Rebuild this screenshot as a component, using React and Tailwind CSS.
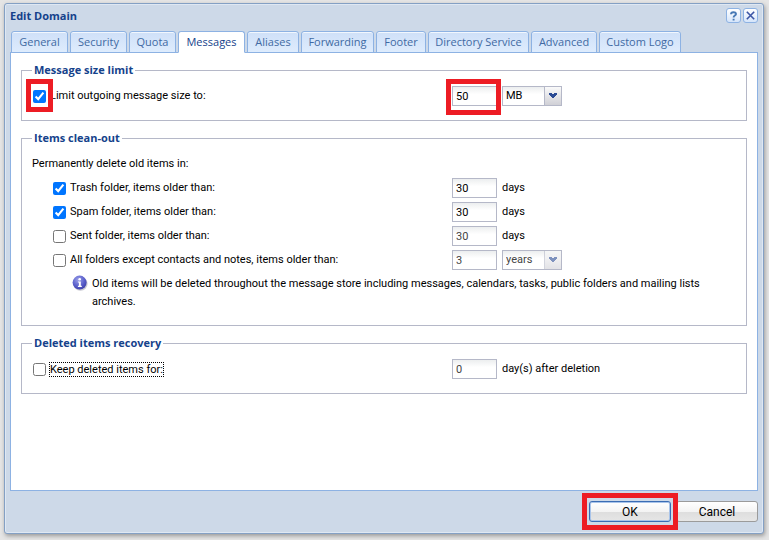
import React from "react";

const tabs = [
  { name: "General", width: "w-[57px]" },
  { name: "Security", width: "w-[57px]" },
  { name: "Quota", width: "w-[47px]" },
  { name: "Messages", width: "w-[67px]" },
  { name: "Aliases", width: "w-[52px]" },
  { name: "Forwarding", width: "w-[73px]" },
  { name: "Footer", width: "w-[50px]" },
  { name: "Directory Service", width: "w-[101px]" },
  { name: "Advanced", width: "w-[66px]" },
  { name: "Custom Logo", width: "w-[82px]" },
];

function Tab({ name, width, active }) {
  const look = active
    ? "border-b-white bg-white text-[#15428b]"
    : "border-b-[#8db2e3] bg-linear-to-b from-[#cfe0f8] to-[#deecfd] text-[#416aa3] shadow-[inset_0_1px_0_#f2f7fe]";
  return (
    <button
      type="button"
      role="tab"
      aria-selected={active}
      className={`${width} h-[22px] shrink-0 whitespace-nowrap rounded-t-[3px] border border-x-[#8db2e3] border-t-[#8db2e3] text-center font-['Open_Sans','Noto_Sans',sans-serif] leading-5 ${look}`}
    >
      {name}
    </button>
  );
}

function Group({ title, children, className = "" }) {
  return (
    <fieldset className={`min-w-0 border border-[#b5b8c8] px-[10px] ${className}`}>
      <legend className="px-[2px] font-['Open_Sans','Noto_Sans',sans-serif] leading-4 font-bold text-[#15428b]">
        {title}
      </legend>
      {children}
    </fieldset>
  );
}

function Check({ id, label, checked, marked, focused }) {
  return (
    <div className="flex h-5 w-full items-center gap-1">
      <span className="relative ml-px flex">
        <input id={id} type="checkbox" defaultChecked={checked} className="m-0 size-[13px] accent-[#0075ff]" />
        {marked && (
          <span className="pointer-events-none absolute -top-[11px] -left-[7px] h-[33px] w-[27px] border-5 border-[#ed1c24]" />
        )}
      </span>
      <label htmlFor={id} className={focused ? "-ml-px h-[15px] border border-dotted border-black leading-[13px]" : "leading-4"}>
        {label}
      </label>
    </div>
  );
}

function Field({ label, value, dim, marked }) {
  return (
    <span className="relative flex shrink-0">
      <input
        type="text"
        aria-label={label}
        defaultValue={value}
        className={`h-5 w-[45px] border border-[#b5b8c8] bg-linear-to-b from-[#eceeef] to-white to-40% px-[3px] pt-px ${dim ? "text-[#444]" : "text-black"}`}
      />
      {marked && (
        <span className="pointer-events-none absolute -top-[7px] -left-[6px] h-[36px] w-[55px] border-5 border-[#ed1c24]" />
      )}
    </span>
  );
}

function Unit({ label, value, options, dim }) {
  return (
    <span className="relative flex shrink-0">
      <select
        aria-label={label}
        defaultValue={value}
        className={`h-5 w-[60px] appearance-none border border-[#b5b8c8] bg-linear-to-b from-[#eceeef] to-white to-40% px-[3px] pt-px ${dim ? "text-[#444]" : "text-black"}`}
      >
        {options.map((o) => (
          <option key={o}>{o}</option>
        ))}
      </select>
      <span
        className={`pointer-events-none absolute top-0 right-0 flex h-5 w-[18px] items-center justify-center border border-[#b5b8c8] bg-linear-to-b from-[#fafafa] to-[#d0d0d6] ${dim ? "opacity-60" : ""}`}
      >
        <svg width="10" height="6" viewBox="0 0 10 6" fill="#2a4a94" shapeRendering="crispEdges">
          <path d="M1 0h3v1h2V0h3v2H8v1H7v1H6v1H4V4H3V3H2V2H1z" />
        </svg>
      </span>
    </span>
  );
}

function Setting({ indent, children, control }) {
  return (
    <div className="flex items-center">
      <div className={`flex w-[420px] shrink-0 ${indent ? "pl-5" : ""}`}>{children}</div>
      <div className="flex h-5 items-center gap-[5px]">{control}</div>
    </div>
  );
}

function InfoIcon() {
  return (
    <svg width="16" height="16" viewBox="0 0 16 16" className="shrink-0">
      <defs>
        <radialGradient id="ball" cx="0.4" cy="0.3" r="0.75">
          <stop offset="0" stopColor="#9a9fe8" />
          <stop offset="0.6" stopColor="#5a5fcb" />
          <stop offset="1" stopColor="#3a3ca6" />
        </radialGradient>
      </defs>
      <ellipse cx="8.4" cy="8.8" rx="7.2" ry="7" fill="#c9c9d2" />
      <circle cx="7.6" cy="7.6" r="7" fill="url(#ball)" />
      <circle cx="7.7" cy="4.2" r="1.3" fill="#fff" />
      <path d="M5.9 6.4h2.9v4.4h1v1.1H5.9v-1.1h1V7.5h-1z" fill="#fff" />
    </svg>
  );
}

function ToolButton({ label, children }) {
  return (
    <button
      type="button"
      aria-label={label}
      className="flex size-[15px] items-center justify-center rounded-[3px] border border-[#8db2e3] bg-linear-to-b from-white to-[#d5e5fa]"
    >
      {children}
    </button>
  );
}

const buttonBase =
  "h-[21px] w-[82px] rounded-[3px] border bg-[linear-gradient(#ffffff,#f3f3f3_52%,#dedede_55%,#e6e6e6)] text-center text-xs leading-4 text-black";

export default function App() {
  return (
    <div className="min-h-screen bg-[#e5e5e5] pt-[3px] pr-[5px] pb-[6px] pl-1 font-[Roboto,'Noto_Sans',sans-serif] text-[11px] text-black">
      <div
        role="dialog"
        aria-labelledby="dialog-title"
        className="flex min-h-[calc(100vh-9px)] flex-col rounded-[3px] border border-[#84a0c4] bg-[#cdd9e8] px-[5px] pb-[11px] shadow-[inset_0_0_0_1px_#dfe8f3,1px_2px_4px_#999]"
      >
        <header className="flex h-[27px] items-start justify-between pt-1">
          <h1
            id="dialog-title"
            className="font-['Open_Sans','Noto_Sans',sans-serif] leading-4 font-bold text-[#15428b]"
          >
            Edit Domain
          </h1>
          <div className="flex items-center gap-[2px]">
            <ToolButton label="Help">
              <svg width="9" height="10" viewBox="0 0 9 10" fill="none" stroke="#4779b5" strokeWidth="1.9">
                <path d="M2 3.2C2 .6 7 .6 7 3c0 1.600-2.400 1.600-2.400 3.500M4.600 7.800v1.700" />
              </svg>
            </ToolButton>
            <ToolButton label="Close">
              <svg width="9" height="9" viewBox="0 0 9 9" fill="none" stroke="#3c55a5" strokeWidth="1.6">
                <path d="M.8.8l7.400 7.400M8.200.8L.8 8.200" />
              </svg>
            </ToolButton>
          </div>
        </header>

        <div role="tablist" className="relative -mb-px flex gap-[2px] pl-px">
          {tabs.map((t) => (
            <Tab key={t.name} {...t} active={t.name === "Messages"} />
          ))}
        </div>

        <main className="flex flex-1 flex-col gap-[9px] border border-[#8db2e3] bg-white px-[10px] pt-[9px] pb-4">
          <Group title="Message size limit" className="pt-2 pb-[14px]">
            <Setting
              control={
                <>
                  <Field label="Size" value="50" marked />
                  <Unit label="Size unit" value="MB" options={["KB", "MB", "GB"]} />
                </>
              }
            >
              <Check id="limit" label="Limit outgoing message size to:" checked marked />
            </Setting>
          </Group>

          <Group title="Items clean-out" className="pt-2 pb-[14px]">
            <p className="mb-1 leading-5">Permanently delete old items in:</p>
            <div className="flex flex-col gap-1">
              <Setting indent control={<><Field label="Trash age" value="30" /><span>days</span></>}>
                <Check id="trash" label="Trash folder, items older than:" checked />
              </Setting>
              <Setting indent control={<><Field label="Spam age" value="30" /><span>days</span></>}>
                <Check id="spam" label="Spam folder, items older than:" checked />
              </Setting>
              <Setting indent control={<><Field label="Sent age" value="30" dim /><span>days</span></>}>
                <Check id="sent" label="Sent folder, items older than:" />
              </Setting>
              <Setting
                indent
                control={
                  <>
                    <Field label="Age in all folders" value="3" dim />
                    <Unit label="Age unit" value="years" options={["days", "months", "years"]} dim />
                  </>
                }
              >
                <Check id="all" label="All folders except contacts and notes, items older than:" />
              </Setting>
            </div>
            <div className="mt-[5px] flex gap-1 pl-10">
              <InfoIcon />
              <p className="pr-5 leading-[18px]">
                Old items will be deleted throughout the message store including messages, calendars, tasks, public folders and mailing lists archives.
              </p>
            </div>
          </Group>

          <Group title="Deleted items recovery" className="pt-2 pb-[14px]">
            <Setting control={<><Field label="Days kept" value="0" dim /><span>day(s) after deletion</span></>}>
              <Check id="keep" label="Keep deleted items for:" focused />
            </Setting>
          </Group>
        </main>

        <footer className="flex justify-end gap-[5px] pt-[10px]">
          <span className="relative flex">
            <button type="submit" className={`${buttonBase} border-[#3a6cb4] shadow-[inset_0_0_0_1px_#a9c4ea]`}>
              OK
            </button>
            <span className="pointer-events-none absolute -top-2 -left-[7px] h-[37px] w-[96px] border-5 border-[#ed1c24]" />
          </span>
          <button type="button" className={`${buttonBase} border-[#9b9b9b]`}>
            Cancel
          </button>
        </footer>
      </div>
    </div>
  );
}
